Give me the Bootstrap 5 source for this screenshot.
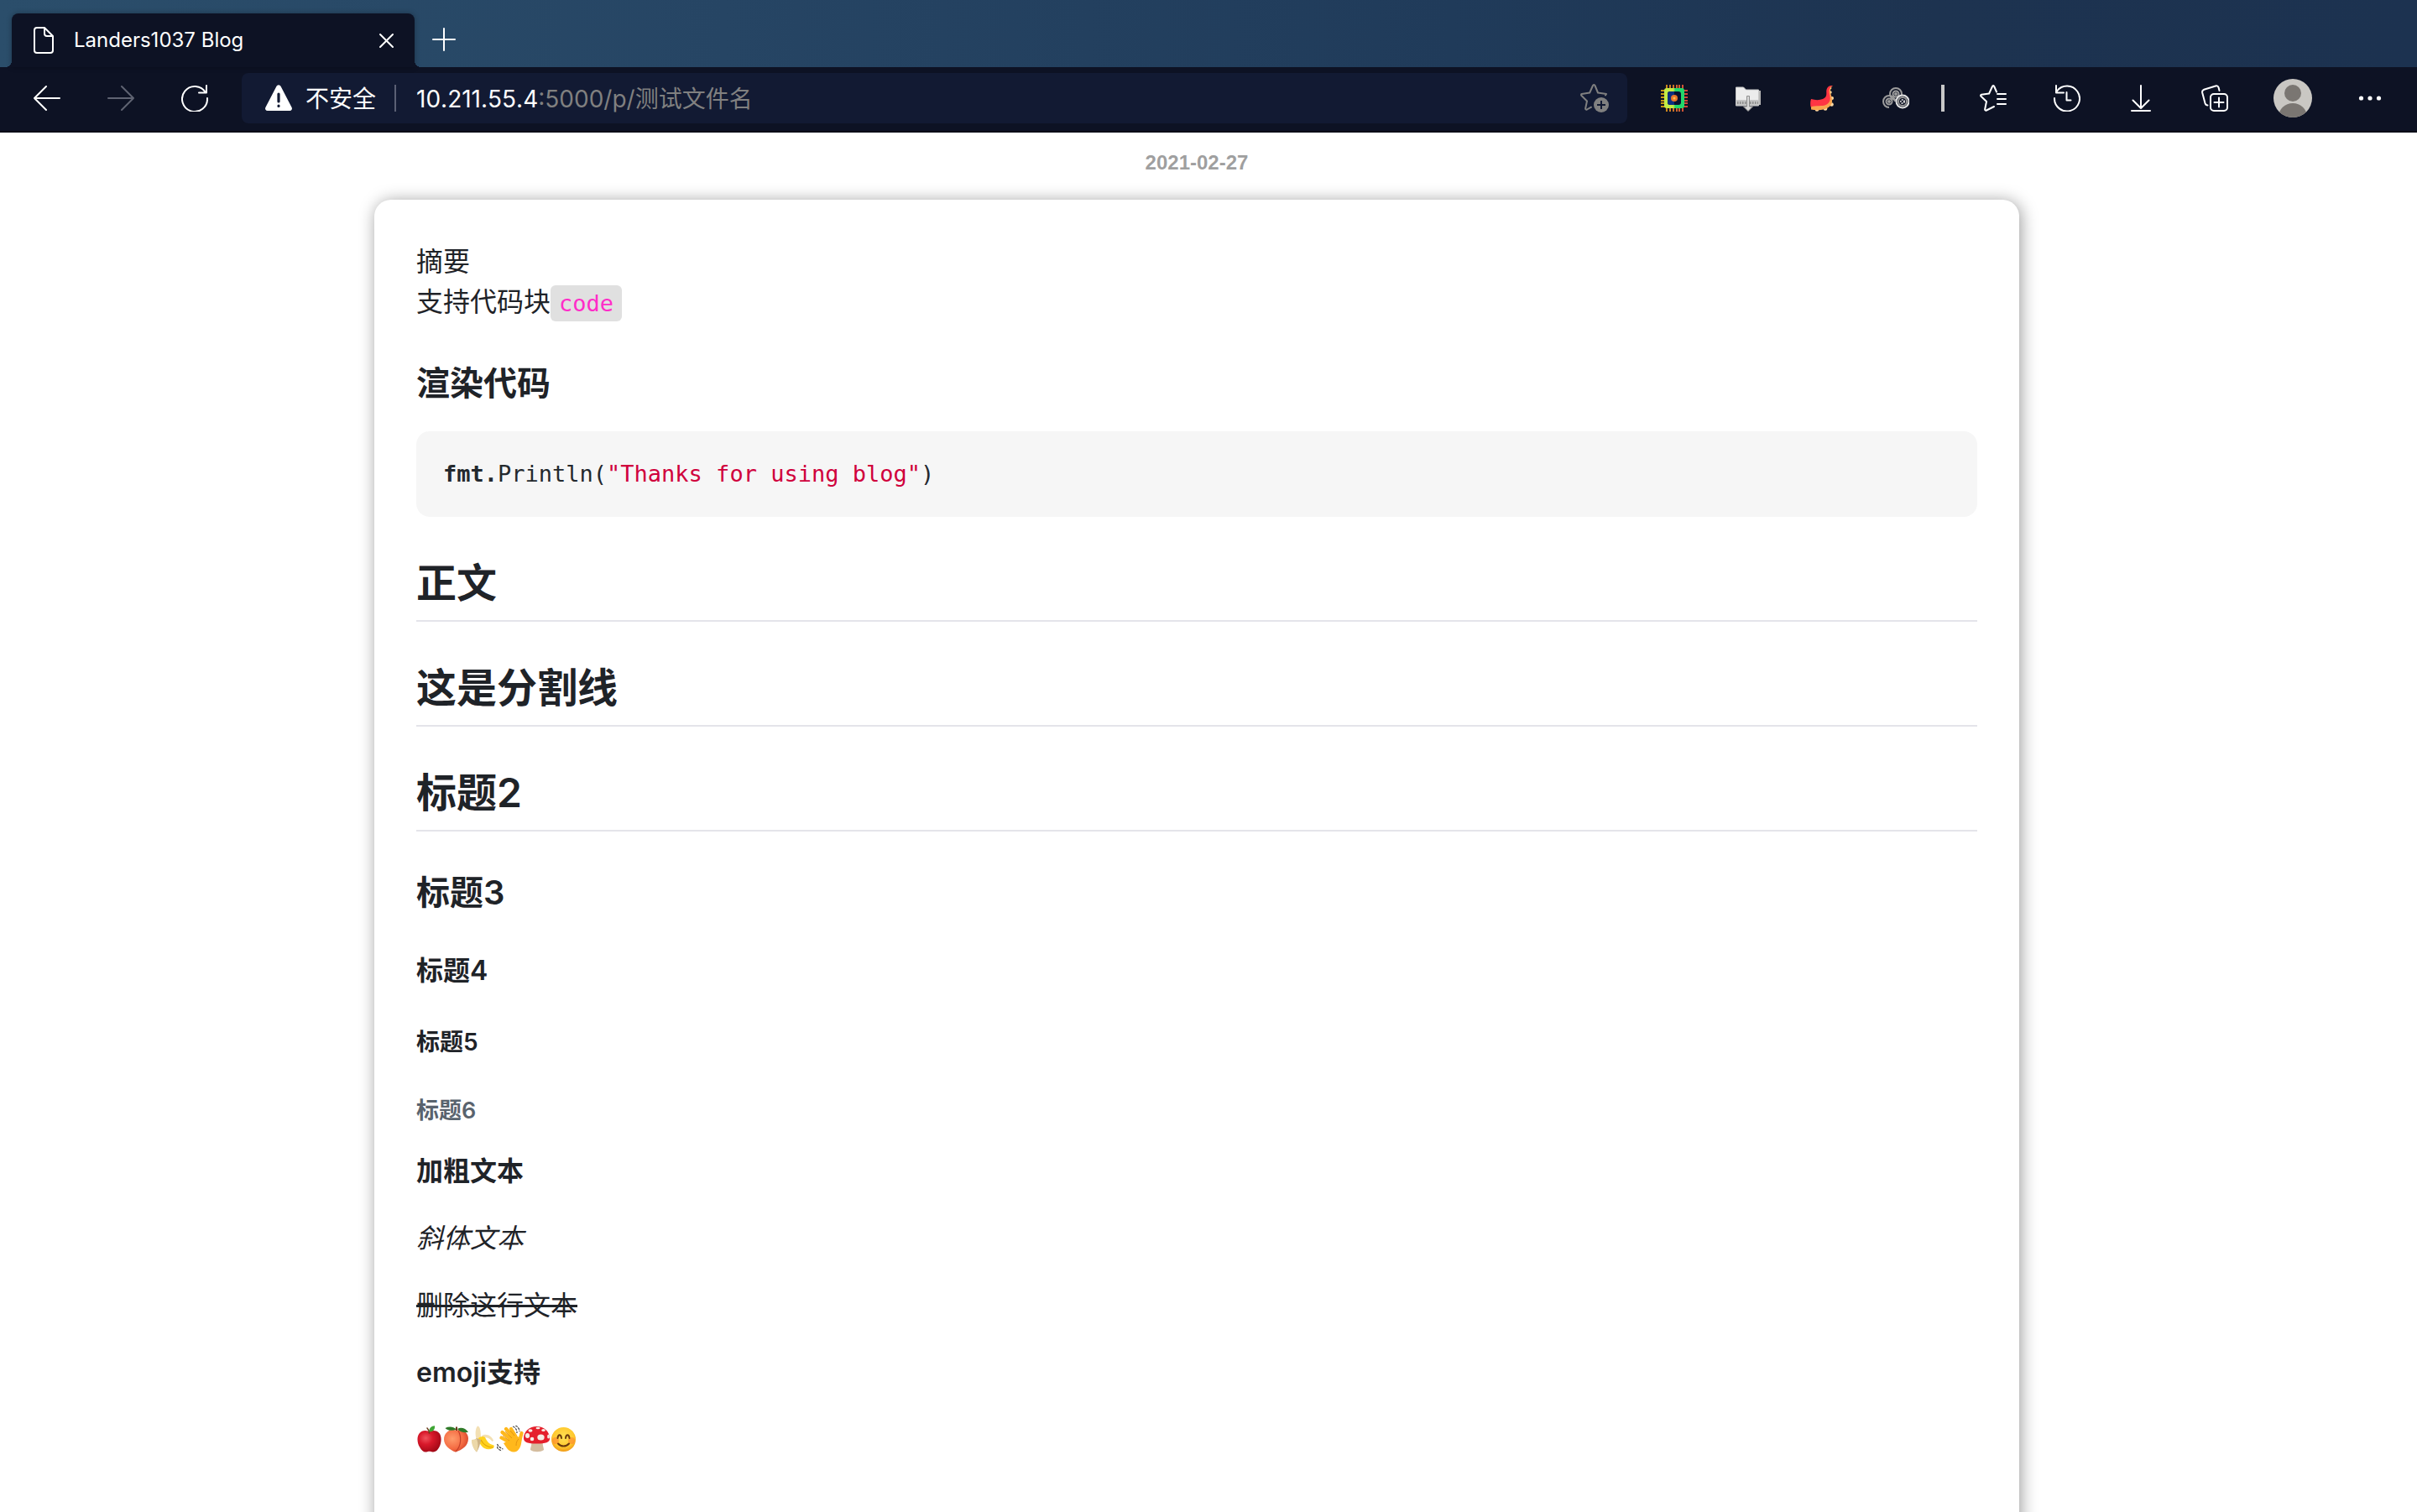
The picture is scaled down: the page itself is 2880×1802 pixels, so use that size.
<!DOCTYPE html>
<html lang="zh-CN">
<head>
<meta charset="utf-8">
<meta name="viewport" content="width=device-width, initial-scale=1">
<title>Landers1037 Blog</title>
<link href="https://cdn.jsdelivr.net/npm/bootstrap@5.3.0/dist/css/bootstrap.min.css" rel="stylesheet">
<script src="https://cdn.jsdelivr.net/npm/bootstrap@5.3.0/dist/js/bootstrap.bundle.min.js"></script>
<style>
  body { font-family: Inter, "Noto Sans CJK SC", sans-serif; font-size: 32px; line-height: 48px; color: #1f2328; background: #fff; }
  svg { display: block; flex: none; }
  .line-icon { fill: none; stroke: currentColor; stroke-width: 2; stroke-linecap: round; stroke-linejoin: round; }
  .tab-strip { height: 80px; padding: 16px 14px 0; background: linear-gradient(90deg, #2b4e6b, #264564 30%, #203b5a 60%, #1d3350 80%, #1c3250); }
  .page-tab { position: relative; width: 480px; height: 64px; padding: 0 20px 0 26px; border-radius: 8px 8px 0 0; background: #0d1224; color: #fff; font-size: 24px; line-height: 32px; box-shadow: 0 0 6px rgba(0,0,0,.3); }
  .page-tab::before, .page-tab::after { content: ""; position: absolute; bottom: 0; width: 8px; height: 8px; }
  .page-tab::before { right: 100%; background: radial-gradient(circle at 0 0, transparent 8px, #0d1224 8px); }
  .page-tab::after { left: 100%; background: radial-gradient(circle at 100% 0, transparent 8px, #0d1224 8px); }
  .tab-name { margin-left: 24px; }
  .tool-btn { padding: 0; border: 0; background: none; color: #fff; display: flex; align-items: center; justify-content: center; }
  .tool-off { color: #5f6372; }
  .tab-add { width: 28px; height: 28px; margin: 17px 0 0 21px; }
  .toolbar { height: 78px; padding: 8px 40px 10px; background: #0d1224; border-bottom: 2px solid #080b17; box-sizing: border-box; }
  .nav-tools { gap: 56px; width: 248px; }
  .address { height: 60px; padding: 0 22px 0 28px; border-radius: 8px; background: #121a33; font-size: 28px; line-height: 40px; }
  .address-label { margin-left: 16px; color: #fff; }
  .address-rule { width: 2px; height: 32px; margin: 0 24px 0 22px; background: #5b6074; }
  .address-label, .address a { padding-top: 2px; }
  .address a { color: #808080; text-decoration: none; }
  .address a span { color: #fff; font-kerning: none; }
  .tool-row { padding-left: 40px; gap: 56px; }
  .tool-rule { width: 4px; height: 32px; margin: 0 -14px 0 -18px; background: #c8c8c8; }
  .account { margin: 0 -3px 0 -2px; }
  .viewport { padding: 18px 28px 0 0; background: #fff; }
  .post-date { margin: 0 0 26px; font: bold 24px/36px "Liberation Sans", sans-serif; color: #9f9f9f; }
  .post { width: 1960px; max-width: 90%; min-height: 100vh; padding: 50px; border-radius: 20px; background: #fff; box-shadow: 2px 2px 20px rgba(0,0,0,.4); }
  .post p { margin: 0 0 32px; }
  .post h2, .post h3, .post h4, .post h5, .post h6 { margin: 48px 0 32px; font-weight: 600; color: #1f2328; }
  .post h2 { font-size: 48px; line-height: 61px; padding-bottom: 14px; border-bottom: 2px solid #e4e4ea; }
  .post h3 { font-size: 40px; line-height: 50px; }
  .post h4 { font-size: 32px; line-height: 40px; }
  .post h5 { font-size: 28px; line-height: 35px; }
  .post h6 { font-size: 27px; line-height: 32px; color: #59636e; }
  .post strong { font-weight: 600; }
  .post code, .post pre { font-family: "DejaVu Sans Mono", monospace; font-size: 27px; }
  .post p code { padding: 6px 10px; border-radius: 6px; background: #e0e0e0; color: #ff2dc8; line-height: 32px; }
  .post pre { margin: 0 0 32px; padding: 32px; border-radius: 16px; background: #f6f6f6; line-height: 38px; color: #24292e; overflow: hidden; }
  .post pre code { color: inherit; }
  .code-str { color: #d0003c; }
  .emoji-row { height: 46px; }
</style>
</head>
<body>
<div class="d-flex flex-column vh-100 overflow-hidden">
  <header>
    <div class="tab-strip d-flex">
      <div class="page-tab d-flex align-items-center">
        <svg class="line-icon" width="24" height="32" viewBox="0 0 24 32"><path d="M13 1H4a3 3 0 0 0-3 3v24a3 3 0 0 0 3 3h16a3 3 0 0 0 3-3V11zM13 1v7a3 3 0 0 0 3 3h7"/></svg>
        <span class="tab-name">Landers1037 Blog</span>
        <button class="tool-btn ms-auto" type="button" aria-label="Close tab"><svg class="line-icon" width="24" height="24" viewBox="0 0 24 24"><path d="M3 5l15 15M18 5L3 20"/></svg></button>
      </div>
      <button class="tool-btn tab-add" type="button" aria-label="New tab"><svg class="line-icon" width="28" height="28" viewBox="0 0 28 28"><path d="M14 1v26M1 14h26"/></svg></button>
    </div>
    <nav class="toolbar d-flex align-items-center">
      <div class="nav-tools d-flex flex-shrink-0">
        <button class="tool-btn" type="button" aria-label="Back"><svg class="line-icon" width="32" height="32" viewBox="0 0 32 32"><path d="M31 16H1M15 2L1 16l14 14"/></svg></button>
        <button class="tool-btn tool-off" type="button" aria-label="Forward"><svg class="line-icon" width="32" height="32" viewBox="0 0 32 32"><path d="M1 16h30M17 2l14 14-14 14"/></svg></button>
        <button class="tool-btn" type="button" aria-label="Reload"><svg class="line-icon" width="32" height="32" viewBox="0 0 32 32"><path d="M29 9.500A15 15 0 1 0 31 16M30 1v8.500h-9"/></svg></button>
      </div>
      <div class="address d-flex align-items-center flex-fill">
        <svg width="32" height="32" viewBox="0 0 32 32"><path fill="#fff" d="M13.500 1.800a2.800 2.800 0 0 1 5 0L31.600 27a2.700 2.700 0 0 1-2.400 4H2.800a2.700 2.700 0 0 1-2.400-4z"/><path stroke="#121a33" stroke-width="3.200" stroke-linecap="round" d="M16 11v9M16 25.200v.2"/></svg>
        <span class="address-label">不安全</span>
        <span class="address-rule"></span>
        <a href="#"><span>10.211.55.4</span>:5000/p/测试文件名</a>
        <button class="tool-btn ms-auto" type="button" aria-label="Add to favourites"><svg width="34" height="34" viewBox="0 0 34 34"><path fill="none" stroke="#808080" stroke-width="2" stroke-linecap="round" stroke-linejoin="round" d="M30 13.500l1-1.500-10-1.500-3.500-8.500c-.5-1.300-2-1.300-2.500 0L11.200 10.500 1.800 12c-1 .3-1 1.200-.3 2l6.500 6.500-1.800 8.500c-.2 1.500.8 2 1.800 1.500l5-2.800"/><circle cx="25" cy="25" r="9" fill="#808080"/><path stroke="#121a33" stroke-width="2" d="M25 20v10M20 25h10"/></svg></button>
      </div>
      <div class="tool-row d-flex align-items-center flex-shrink-0">
        <button class="tool-btn" type="button" aria-label="Chip extension"><svg width="32" height="32" viewBox="0 0 32 32"><defs><linearGradient id="chip"><stop offset=".45" stop-color="#c3ec46"/><stop offset=".55" stop-color="#22d86a"/></linearGradient><linearGradient id="pins"><stop stop-color="#c79a14"/><stop offset="1" stop-color="#d1423c"/></linearGradient></defs><path fill="url(#pins)" d="M6 0h2v32H6zM10 0h2v32h-2zM14 0h2v32h-2zM18 0h2v32h-2zM21 0h2v32h-2zM25 0h2v32h-2zM0 6h32v2H0zM0 10h32v2H0zM0 14h32v2H0zM0 18h32v2H0zM0 21h32v2H0zM0 25h32v2H0z"/><rect x="4" y="4" width="24" height="24" rx="3" fill="url(#chip)"/><rect x="8" y="8" width="16" height="16" rx="3" fill="#081230"/><path fill="#0c2f80" d="M11 8h5v16h-5a3 3 0 0 1-3-3V11a3 3 0 0 1 3-3z"/><circle cx="16" cy="16" r="4" fill="#e8762a"/><circle cx="16" cy="16" r="1.500" fill="#ffc04d"/></svg></button>
        <button class="tool-btn" type="button" aria-label="Download folder extension"><svg width="32" height="32" viewBox="0 0 32 32"><path fill="#b5b5b5" d="M27 7h4v17h-4z"/><path fill="#ececec" stroke="#c8c8c8" d="M1.500 25V3h9l3 3h15v19z"/><path fill="#c4c4c4" d="M1 18h28v7H1z"/><path stroke="#8d8d8d" stroke-dasharray="1.500 1.500" stroke-width="3" d="M3 21.500h25"/><path fill="#d9d9d9" stroke="#8d8d8d" d="M14.500 13.500h3V26h4L16 31.500 10.500 26h4z"/></svg></button>
        <button class="tool-btn" type="button" aria-label="Tentacle extension"><svg width="32" height="32" viewBox="0 0 32 32"><g fill="#ffdca6"><circle cx="10" cy="29.500" r="2.300"/><circle cx="20" cy="28.500" r="2.300"/><circle cx="27.500" cy="23.500" r="2.300"/><circle cx="28" cy="16" r="2"/><circle cx="26" cy="9" r="1.700"/><circle cx="26" cy="4" r="1.400"/></g><path fill="#f9a54f" d="M3 24v5.500c7 1.500 17 .8 22-3.500 5-4.500 3-10 1.500-15C25.500 7 26 3 29 1l-4 1-4 14-8 8z"/><path fill="#ff3543" d="M3 17c5 1.500 10 1.500 14 0 4-1.500 4.500-4.500 4.300-8C21 4 23.500.5 29 1c-4.500 2-5 6-4 10 1.500 6 1 10-3.500 12.500C16 26.500 9 24 2.500 26.500 2 23 2 20 3 17z"/></svg></button>
        <button class="tool-btn" type="button" aria-label="Gears extension"><svg width="32" height="32" viewBox="0 0 32 32" fill="none" stroke="#9c9c9c" stroke-width="2"><circle cx="16" cy="11" r="7"/><circle cx="16" cy="11" r="3.500"/><circle cx="16" cy="11" r="1" fill="#ccc"/><path d="M8 27a7 7 0 1 1 7-7"/><circle cx="8" cy="20" r="3.500"/><circle cx="8" cy="20" r="1"/><circle cx="24" cy="20" r="7.500" fill="#0d1224" stroke="#e4e4e4"/><circle cx="24" cy="20" r="5" stroke="#999"/><circle cx="24" cy="20" r="2" stroke="#ddd" stroke-dasharray="1.500 1"/></svg></button>
        <span class="tool-rule"></span>
        <button class="tool-btn" type="button" aria-label="Favourites"><svg class="line-icon" width="32" height="32" viewBox="0 0 32 32"><path d="M21 11h10M21 17h10M21 23h10M17 26l-9 4.500c-1 .5-2-.2-1.800-1.500L8 20 1.500 13.800c-.8-.8-.4-1.800.6-2l9-1.300L15 2c.5-1.200 1.700-1.200 2.200 0L20 8.500"/></svg></button>
        <button class="tool-btn" type="button" aria-label="History"><svg class="line-icon" width="32" height="32" viewBox="0 0 32 32"><path d="M1 16A15 15 0 1 0 4 7.500L3 9.500M3 1v8.500h9M15.500 9v9.500h5"/></svg></button>
        <button class="tool-btn" type="button" aria-label="Downloads"><svg class="line-icon" width="32" height="32" viewBox="0 0 32 32"><path d="M16 1v27M6.500 18.500L16 28l9.500-9.500M5 31h22"/></svg></button>
        <button class="tool-btn" type="button" aria-label="Collections"><svg class="line-icon" width="32" height="32" viewBox="0 0 32 32"><rect x="11" y="11" width="20" height="20" rx="4"/><path d="M21 15.500v11M15.500 21h11M7.500 24.500c-1.500 0-2.500-1-3-2.500L1.200 9.500c-.4-1.800.3-3.200 2-3.800L17 1.500c1.800-.5 3 .2 3.600 1.800L21.500 7"/></svg></button>
        <button class="tool-btn account" type="button" aria-label="Account"><svg width="46" height="46" viewBox="0 0 46 46"><defs><clipPath id="disc"><circle cx="23" cy="23" r="23"/></clipPath></defs><g clip-path="url(#disc)"><path fill="#c9c7c3" d="M0 0h46v46H0z"/><circle cx="23" cy="17" r="10" fill="#7a7672"/><ellipse cx="23" cy="45" rx="17" ry="16" fill="#7a7672"/></g></svg></button>
        <button class="tool-btn" type="button" aria-label="More"><svg width="32" height="32" viewBox="0 0 32 32" fill="#fff"><circle cx="5.500" cy="16" r="2.600"/><circle cx="16" cy="16" r="2.600"/><circle cx="26.500" cy="16" r="2.600"/></svg></button>
      </div>
    </nav>
  </header>
  <main class="viewport flex-fill overflow-hidden">
    <p class="post-date text-center">2021-02-27</p>
    <article class="post mx-auto">
      <p>摘要<br>支持代码块<code>code</code></p>
      <h3>渲染代码</h3>
      <pre><code><b>fmt.</b>Println(<span class="code-str">"Thanks for using blog"</span>)</code></pre>
      <h2>正文</h2>
      <h2>这是分割线</h2>
      <h2>标题2</h2>
      <h3>标题3</h3>
      <h4>标题4</h4>
      <h5>标题5</h5>
      <h6>标题6</h6>
      <p><strong>加粗文本</strong></p>
      <p><em>斜体文本</em></p>
      <p><del>删除这行文本</del></p>
      <p><strong>emoji支持</strong></p>
      <div class="emoji-row d-flex align-items-center">
        <svg role="img" aria-label="apple" width="32" height="32" viewBox="0 0 32 32"><defs><radialGradient id="ap" cx=".35" cy=".35" r=".75"><stop stop-color="#f0525c"/><stop offset=".4" stop-color="#d8182a"/><stop offset="1" stop-color="#9c0714"/></radialGradient></defs><path fill="url(#ap)" d="M15.500 7.500C12 5 6.500 5.500 3.500 9.500c-3 4-2.500 11 .5 16 2.500 4.500 5 6.500 8 6 1.500-.2 2-.7 3.500-.7s2.500.5 4 .7c3 .4 6-2 8-6 2.500-5 3-12 .3-16C25 5.500 19 5 15.500 7.500z"/><path fill="none" stroke="#6b3b1c" stroke-width="1.600" stroke-linecap="round" d="M15.500 9c0-3-1-4.500-2.500-6"/><path fill="#3fa535" d="M15.500 7.500C15 3 18 .5 22 .3 22.500 5 20 7.500 15.500 7.500z"/></svg>
        <svg role="img" aria-label="peach" width="32" height="32" viewBox="0 0 32 32"><defs><radialGradient id="pe" cx=".35" cy=".4" r=".75"><stop stop-color="#ff9c6c"/><stop offset=".6" stop-color="#f46b42"/><stop offset="1" stop-color="#cf3c24"/></radialGradient></defs><path fill="url(#pe)" d="M16 6C9 3 1 8 1 16.500c0 7 7 12.500 13.500 15C23 29 30 24 30 15.500 30 8 22 3 16 6z"/><path fill="none" stroke="#c5402a" stroke-width="1.200" d="M18 6c4 7 4 18-3 25"/><path fill="#2f7a28" d="M16 4.500C12 1 7 .8 2.500 3 5 6 11 6.800 16 4.500zM17 4c4-2.500 10-1 13 4-5 .5-10 0-13-4z"/><path stroke="#6b3b1c" stroke-width="2" d="M16 1.500V6"/></svg>
        <svg role="img" aria-label="banana" width="32" height="32" viewBox="0 0 32 32"><path fill="#f3e0b4" d="M8 17c-2-5-2-13 1-16.500C13 1 13 10 13 17zM14 12c5-3 12 0 14 6l-1.500 1c-3-4-7-6-12-4z"/><path fill="#ffd21f" d="M10 15c2-2 6-3 8-1 2 4 4 8 10.500 9.500.5 2 0 3-1 3.500-9 4-16-2-17.500-12z"/><path fill="none" stroke="#e6a800" stroke-width="1.200" d="M13 17c3 6 8 9 14.500 9"/><path fill="#cdb283" d="M8 15l5 2c-1 5-2 10-5 14.500C5 29 3 24 3 19z"/><path fill="#ecd8a8" d="M2 17l6-1c2 5 2 11 0 15.500C4 28 1.500 22 2 17z"/></svg>
        <svg role="img" aria-label="waving hand" width="32" height="32" viewBox="0 0 32 32"><g fill="none" stroke="#ffb81c" stroke-width="4.200" stroke-linecap="round"><path d="M17 21L5.500 14.500M19 18L6.500 8M20 14L11 4M22 12l-5-8M27 19l2.500-10"/></g><path fill="#ffb81c" d="M12 19l9-10 5 5 3-3c1 8 .5 15-5 19.500-4 2.500-9 .5-12-3.500l-4-6z"/><g fill="none" stroke="#dc8c0c" stroke-width=".8"><path d="M7 12l8 6M10 7l8 8M16 6l5 6M23 24c0-4 1-6 3-8"/></g><g fill="none" stroke="#444" stroke-width="1.200" stroke-dasharray="3 1"><path d="M19 1c3 1 5 4 5 8M22 0c3 1 5 4 5 7M.500 22c1 3 4 5 7 6M0 25c1 3 3 4 6 5"/></g></svg>
        <svg role="img" aria-label="mushroom" width="32" height="32" viewBox="0 0 32 32"><path fill="#d4bd9f" d="M9 19h14c-1 4 1 7 1 10-4 3-12 3-16 0 0-3 2-6 1-10z"/><path fill="#e5202c" d="M0 15C0 7 7 1 15.500 1S31 7 31 15c.5 5-5 6.500-15.500 6.500S0 20 0 15z"/><g fill="#f5eee6"><ellipse cx="8" cy="6" rx="2.500" ry="1.800"/><ellipse cx="17" cy="3" rx="2.500" ry="1.300"/><ellipse cx="23.500" cy="5.500" rx="2.200" ry="1.600"/><ellipse cx="4.500" cy="12" rx="2.600" ry="3"/><circle cx="10" cy="16" r="2.300"/><ellipse cx="20.500" cy="14" rx="4.200" ry="3.500"/><ellipse cx="29.500" cy="13" rx="1.400" ry="2.600"/></g></svg>
        <svg role="img" aria-label="smiling face" width="32" height="32" viewBox="0 0 32 32"><defs><radialGradient id="sm" cx=".5" cy=".4" r=".6"><stop stop-color="#ffe054"/><stop offset=".7" stop-color="#ffc92e"/><stop offset="1" stop-color="#f09a16"/></radialGradient></defs><circle cx="15.500" cy="16.500" r="14.500" fill="url(#sm)"/><g fill="#ff7a32" opacity=".5"><circle cx="6" cy="18" r="4"/><circle cx="25" cy="18" r="4"/></g><g fill="none" stroke="#6b3a0c" stroke-width="2" stroke-linecap="round"><path d="M8.500 15c.5-5 4-5 4.500 0M18 15c.5-5 4-5 4.500 0M9 21.500c3.500 4 9.500 4 13 0"/></g></svg>
      </div>
    </article>
  </main>
</div>
</body>
</html>
